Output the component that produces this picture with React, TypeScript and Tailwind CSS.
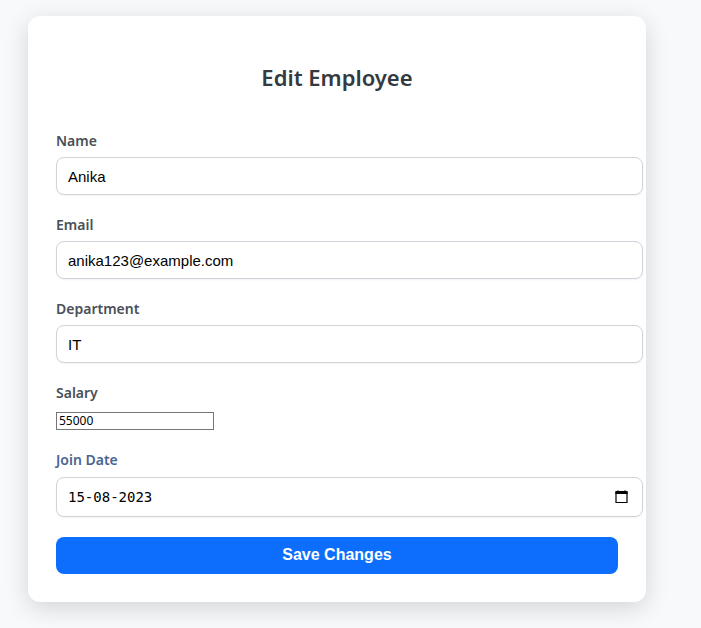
import React, { useState } from "react";

const labelClass = "mb-1.5 block text-sm leading-5 font-semibold text-[#495057]";
const inputClass =
  "block w-full rounded-lg border border-[#ced4da] bg-white px-[11px] font-['Liberation_Sans',Arial,sans-serif] text-[15px] leading-5 text-black shadow-[0_1px_2px_rgba(0,0,0,0.05)] outline-none";

type FieldProps = { id: string; label: string; type?: string; value: string };

function Field({ id, label, type = "text", value }: FieldProps) {
  const [current, setCurrent] = useState(value);
  return (
    <div className="-mr-[25px] mb-5">
      <label htmlFor={id} className={labelClass}>{label}</label>
      <input id={id} type={type} value={current} onChange={(e) => setCurrent(e.target.value)} className={`${inputClass} h-[38px]`} />
    </div>
  );
}

export default function App() {
  const [salary, setSalary] = useState("55000");
  const [date, setDate] = useState("15-08-2023");
  return (
    <main className="min-h-screen bg-[#f8f9fb] pt-4 pr-[55px] pb-6 pl-7 font-['Noto_Sans','Open_Sans',sans-serif]">
      <form
        onSubmit={(e) => e.preventDefault()}
        className="rounded-xl bg-white px-7 pt-[43px] pb-7 shadow-[0_6px_24px_rgba(0,0,0,0.15)]"
      >
        <h2 className="mb-9 text-center text-[22px] leading-9 font-semibold text-[#343a40]">Edit Employee</h2>
        <Field id="name" label="Name" value="Anika" />
        <Field id="email" label="Email" type="email" value="anika123@example.com" />
        <Field id="department" label="Department" value="IT" />
        <div className="mb-5">
          <label htmlFor="salary" className={labelClass}>Salary</label>
          <div className="pt-[3px]">
            <input
              id="salary"
              inputMode="numeric"
              value={salary}
              onChange={(e) => setSalary(e.target.value)}
              className="block h-[18px] w-[158px] border border-[#767676] bg-white px-0.5 pb-0.5 font-['Noto_Sans',sans-serif] text-xs leading-[14px] text-black outline-none"
            />
          </div>
        </div>
        <div className="-mr-[25px] mb-5">
          <label htmlFor="join-date" className="mb-[7px] block text-sm leading-5 font-semibold text-[#4a6490]">Join Date</label>
          <div className={`${inputClass} flex h-10 items-center justify-between`}>
            <input
              id="join-date"
              value={date}
              onChange={(e) => setDate(e.target.value)}
              className="w-40 bg-transparent font-['DejaVu_Sans_Mono',monospace] text-sm outline-none"
            />
            <button type="button" aria-label="Open calendar" className="mr-0.5">
              <svg viewBox="0 0 16 16" className="size-4" fill="none" stroke="black">
                <path d="M3 3v10.5h11V3" strokeWidth="1.2" strokeLinejoin="round" />
                <path d="M5 1.5v2M12 1.5v2" strokeWidth="1.5" />
                <path d="M2.4 3.5h12.2" strokeWidth="3" />
              </svg>
            </button>
          </div>
        </div>
        <button type="submit" className="block h-[37px] w-full rounded-lg bg-[#0d6efd] pb-0.5 font-['Liberation_Sans',Arial,sans-serif] text-base leading-5 font-bold text-white">
          Save Changes
        </button>
      </form>
    </main>
  );
}
